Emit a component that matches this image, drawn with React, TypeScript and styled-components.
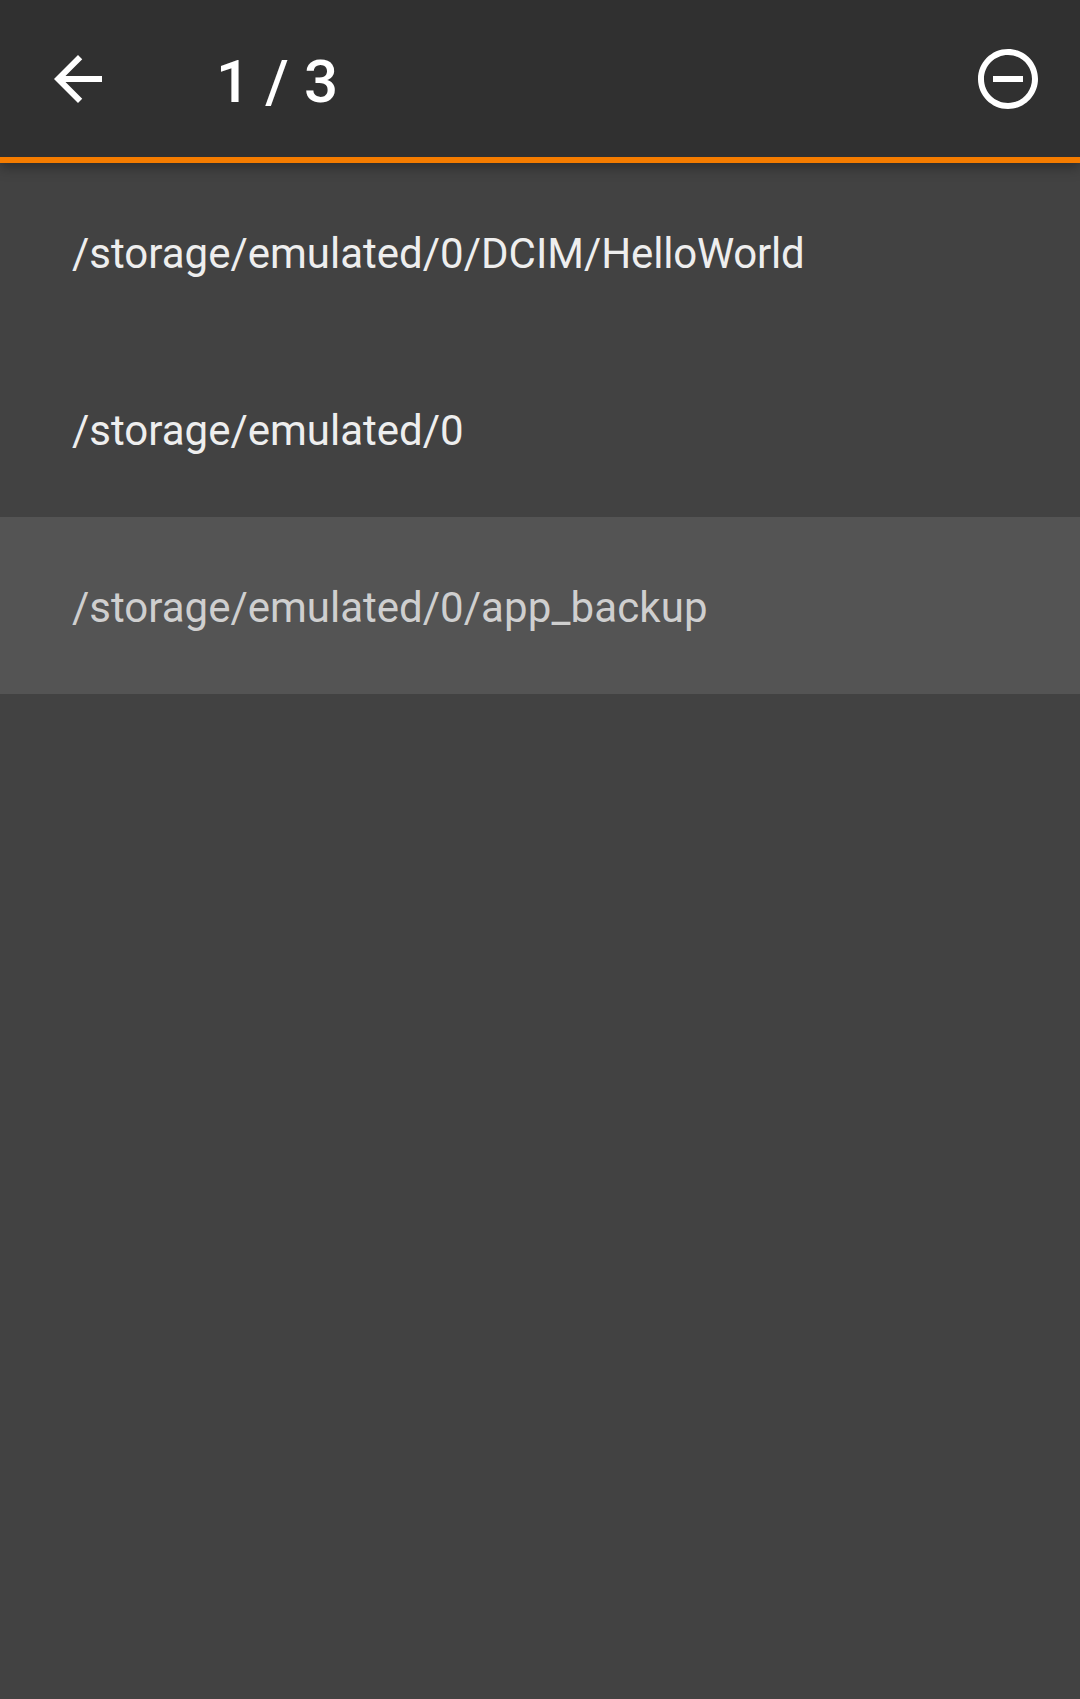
import React from "react";
import styled, { createGlobalStyle } from "styled-components";

const GlobalStyle = createGlobalStyle`
  body { margin: 0; background: #424242; }
  * { box-sizing: border-box; }
`;
const Screen = styled.div`
  width: 1080px;
  height: 1699px;
  background: #424242;
  font-family: Roboto, sans-serif;
  overflow: hidden;
`;
const Toolbar = styled.header`
  position: relative;
  height: 163px;
  padding: 0 36px 0 42px;
  display: flex;
  align-items: center;
  background: #303030;
  border-bottom: 6px solid #f57c00;
  box-shadow: 0 4px 12px rgba(0, 0, 0, 0.35);
`;
const IconButton = styled.button`
  width: 72px;
  height: 72px;
  padding: 0;
  border: 0;
  background: none;
  color: #fff;
  display: flex;
`;
const Title = styled.h1`
  margin: 6px 0 0 102px;
  flex: 1;
  color: #fff;
  font-size: 60px;
  font-weight: 500;
  line-height: 70px;
  word-spacing: 0.3px;
`;
const List = styled.ul`
  list-style: none;
  margin: 0;
  padding: 0;
`;
const Row = styled.li<{ $selected?: boolean }>`
  height: 177px;
  padding: 4px 72px 0;
  display: flex;
  align-items: center;
  font-size: 42px;
  line-height: 50px;
  color: ${(p) => (p.$selected ? "#cfcfcf" : "#eeeeee")};
  background: ${(p) => (p.$selected ? "#545454" : "transparent")};
`;
const Leaf = styled.span<{ $tracking: number }>`
  letter-spacing: ${(p) => p.$tracking}px;
`;

const items = [
  { parent: "/storage/emulated/0/DCIM/", leaf: "HelloWorld", tracking: -0.21 },
  { parent: "/storage/emulated/", leaf: "0", tracking: 0 },
  { parent: "/storage/emulated/0/", leaf: "app_backup", tracking: 0.12, selected: true },
];

export default function App() {
  return (
    <Screen>
      <GlobalStyle />
      <Toolbar>
        <IconButton aria-label="Back">
          <svg width="72" height="72" viewBox="0 0 24 24" fill="currentColor">
            <path d="M20 11H7.83l5.59-5.59L12 4l-8 8 8 8 1.41-1.41L7.83 13H20v-2z" />
          </svg>
        </IconButton>
        <Title>1 / 3</Title>
        <IconButton aria-label="Remove">
          <svg width="72" height="72" viewBox="0 0 24 24" fill="currentColor">
            <path d="M7 11v2h10v-2H7zm5-9C6.48 2 2 6.48 2 12s4.480 10 10 10 10-4.480 10-10S17.520 2 12 2zm0 18c-4.410 0-8-3.590-8-8s3.590-8 8-8 8 3.590 8 8-3.590 8-8 8z" />
          </svg>
        </IconButton>
      </Toolbar>
      <List>
        {items.map((item) => (
          <Row key={item.parent + item.leaf} $selected={item.selected}>
            <span>
              {item.parent}
              <Leaf $tracking={item.tracking}>{item.leaf}</Leaf>
            </span>
          </Row>
        ))}
      </List>
    </Screen>
  );
}
